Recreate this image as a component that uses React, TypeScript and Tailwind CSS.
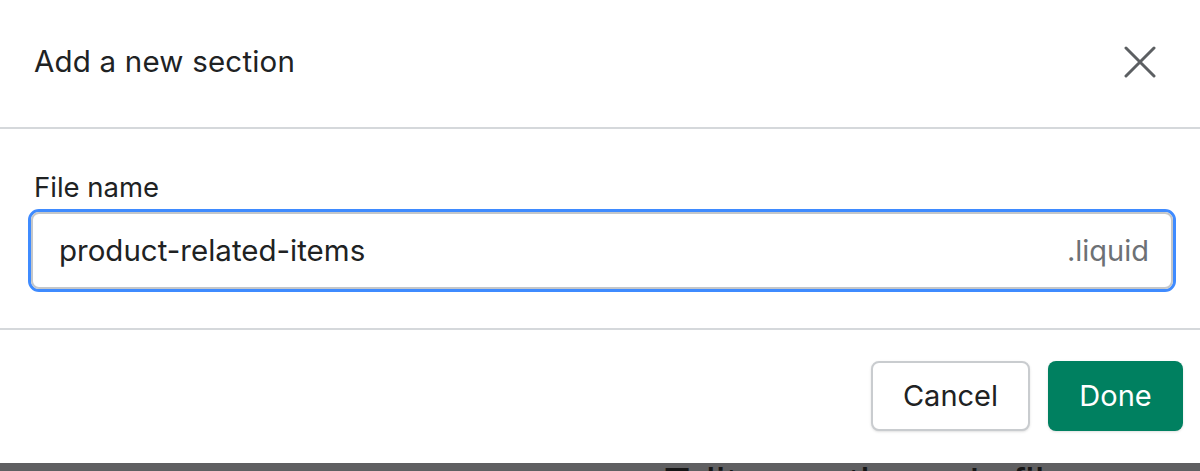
export default function App() {
  return (
    <div className="h-[471px] w-[1200px] overflow-hidden bg-white flex flex-col" style={{ fontFamily: 'Inter, "Noto Sans", sans-serif' }}>
      <div className="h-[463px] bg-white flex flex-col">
        <header className="h-[129px] border-b-2 border-[#d5d8db] flex items-center justify-between pl-[34px] pr-[44px] pb-1">
          <h2 className="text-[29.5px] text-[#202223] tracking-[0.2px]">Add a new section</h2>
          <svg width="32" height="32" viewBox="0 0 32 32" className="text-[#5c5f62]">
            <path d="M2 2 L30 30 M30 2 L2 30" stroke="currentColor" strokeWidth="3" strokeLinecap="round" />
          </svg>
        </header>

        <div className="pl-[28px] pr-[24px] pt-[42px] pb-[36px] border-b-2 border-[#d5d8db]">
          <label className="block pl-[6px] text-[27.5px] leading-[32px] text-[#202223] mb-[6px]">File name</label>
          <div className="rounded-[11px] border-[3px] border-[#3f8bff]">
            <div className="h-[77px] rounded-[8px] border-2 border-[#c4c7ca] flex items-center justify-between pl-[26px] pr-[22px]">
              <span className="text-[29.5px] text-[#202223]">product-related-items</span>
              <span className="text-[29px] text-[#6d7175]">.liquid</span>
            </div>
          </div>
        </div>

        <footer className="flex-1 flex items-start justify-end gap-[18px] pt-[31px] pr-[17px]">
          <button className="h-[70px] w-[159px] rounded-[8px] border-2 border-[#c9cccf] bg-white text-[29px] text-[#202223] shadow-sm">
            Cancel
          </button>
          <button className="h-[70px] w-[135px] rounded-[8px] bg-[#008060] text-[29px] text-white shadow-sm">
            Done
          </button>
        </footer>
      </div>

      <div className="h-[8px] bg-[#5f5f61] overflow-hidden relative">
        <div className="absolute left-[662px] top-[-1px] text-[44px] leading-none text-[#161616] whitespace-nowrap" style={{ fontFamily: '"Liberation Sans", Arial, sans-serif' }}>
          Edit your theme's files
        </div>
      </div>
    </div>
  )
}
